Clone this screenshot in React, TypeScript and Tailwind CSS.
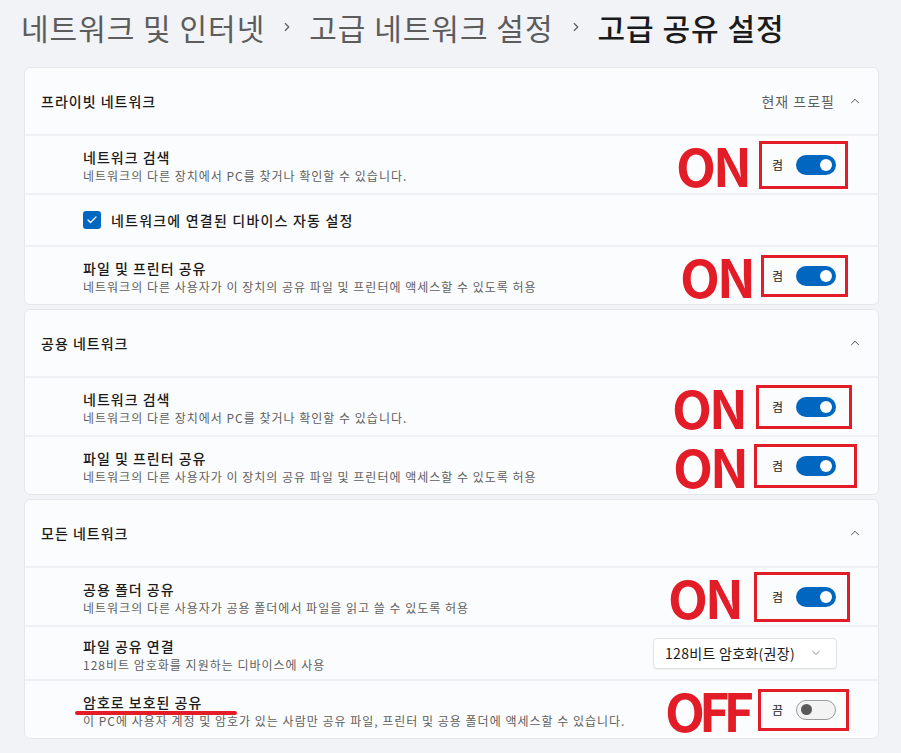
import { ChevronRight, ChevronUp, ChevronDown, Check } from 'lucide-react';

function Toggle({ on }: { on: boolean }) {
  return on ? (
    <div className="flex items-center justify-end w-[40px] h-[20px] rounded-full bg-[#0067c0] pr-[4px]">
      <div className="w-[12px] h-[12px] rounded-full bg-white" />
    </div>
  ) : (
    <div className="flex items-center w-[40px] h-[20px] rounded-full border border-[#9a9a9a] bg-[#f3f3f3] pl-[4px]">
      <div className="w-[11px] h-[11px] rounded-full bg-[#5a5a5a]" />
    </div>
  );
}

// red ON/OFF markup drawn over the screenshot
function Marked({ on, boxCls, gapCls }: { on: boolean; boxCls: string; gapCls: string }) {
  return (
    <div className={`flex items-center ${gapCls}`}>
      <span
        className={`font-['Noto_Sans_CJK_KR','Noto_Sans',sans-serif] font-bold text-[52px] leading-[40px] text-[#e31d27] ${
          on ? 'tracking-[-3px]' : 'tracking-[-6px]'
        }`}
      >
        {on ? 'ON' : 'OFF'}
      </span>
      <div className={`flex items-center gap-[13px] border-[3px] border-[#e31d27] ${boxCls}`}>
        <span className="text-[12px] text-[#1b1b1b]">{on ? '켬' : '끔'}</span>
        <Toggle on={on} />
      </div>
    </div>
  );
}

function SettingText({ title, desc }: { title: string; desc: string }) {
  return (
    <div className="flex flex-col mt-[3px]">
      <span className="text-[14px] leading-[19px] tracking-[1px] font-medium text-[#1b1b1b]">{title}</span>
      <span className="text-[12px] leading-[17px] tracking-[1px] text-[#5f5f5f]">{desc}</span>
    </div>
  );
}

function Row({ children, h = 'h-[59px]' }: { children: React.ReactNode; h?: string }) {
  return (
    <div className={`relative flex items-center justify-between ${h} border-t-2 border-[#eef0f3] pl-[58px] pr-[42px]`}>
      {children}
    </div>
  );
}

function CardHeader({ title, extra }: { title: string; extra?: string }) {
  return (
    <div className="flex items-center justify-between h-[66px] pl-[16px] pr-[16px]">
      <span className="text-[14px] tracking-[1px] font-medium text-[#1b1b1b]">{title}</span>
      <div className="flex items-center gap-[13px] text-[#5f5f5f]">
        {extra && <span className="text-[14px] tracking-[1px]">{extra}</span>}
        <ChevronUp size={14} strokeWidth={1.5} className="text-[#3a3a3a]" />
      </div>
    </div>
  );
}

export default function App() {
  return (
    <div className="w-[901px] h-[753px] overflow-hidden bg-[#f1f3f6] pl-[24px] pr-[22px] font-['Noto_Sans_CJK_KR','Noto_Sans',sans-serif]">
      {/* Breadcrumb */}
      <div className="flex items-center h-[42px] mt-[6px] mb-[19px] -ml-[3px] text-[30px] tracking-[1px]">
        <span className="text-[#5c5c5c]">네트워크 및 인터넷</span>
        <ChevronRight size={14} strokeWidth={2} className="mx-[15px] text-[#5c5c5c]" />
        <span className="text-[#5c5c5c]">고급 네트워크 설정</span>
        <ChevronRight size={14} strokeWidth={2} className="mx-[15px] text-[#5c5c5c]" />
        <span className="font-medium text-[#1b1b1b]">고급 공유 설정</span>
      </div>

      <div className="flex flex-col gap-[4px]">
        {/* Private network */}
        <div className="bg-[#fbfcfd] border border-[#e5e7ea] rounded-[6px]">
          <CardHeader title="프라이빗 네트워크" extra="현재 프로필" />
          <Row>
            <SettingText title="네트워크 검색" desc="네트워크의 다른 장치에서 PC를 찾거나 확인할 수 있습니다." />
            <Marked on gapCls="gap-[10px]" boxCls="pl-[10px] pr-[9px] py-[11px] -mr-[12px]" />
          </Row>
          <Row h="h-[52px]">
            <div className="flex items-center gap-[10px]">
              <div className="flex items-center justify-center w-[18px] h-[18px] rounded-[3px] bg-[#0067c0]">
                <Check size={12} strokeWidth={2.5} className="text-white" />
              </div>
              <span className="text-[14px] tracking-[1.2px] font-medium text-[#1b1b1b]">네트워크에 연결된 디바이스 자동 설정</span>
            </div>
          </Row>
          <Row>
            <SettingText title="파일 및 프린터 공유" desc="네트워크의 다른 사용자가 이 장치의 공유 파일 및 프린터에 액세스할 수 있도록 허용" />
            <Marked on gapCls="gap-[8px]" boxCls="pl-[8px] pr-[9px] py-[8px] -mr-[12px]" />
          </Row>
        </div>

        {/* Public network */}
        <div className="bg-[#fbfcfd] border border-[#e5e7ea] rounded-[6px]">
          <CardHeader title="공용 네트워크" />
          <Row>
            <SettingText title="네트워크 검색" desc="네트워크의 다른 장치에서 PC를 찾거나 확인할 수 있습니다." />
            <Marked on gapCls="gap-[11px]" boxCls="pl-[13px] pr-[13px] py-[9px] -mr-[16px]" />
          </Row>
          <Row>
            <SettingText title="파일 및 프린터 공유" desc="네트워크의 다른 사용자가 이 장치의 공유 파일 및 프린터에 액세스할 수 있도록 허용" />
            <Marked on gapCls="gap-[8px]" boxCls="pl-[15px] pr-[18px] py-[9px] -mr-[21px]" />
          </Row>
        </div>

        {/* All networks */}
        <div className="bg-[#fbfcfd] border border-[#e5e7ea] rounded-[6px]">
          <CardHeader title="모든 네트워크" />
          <Row>
            <SettingText title="공용 폴더 공유" desc="네트워크의 다른 사용자가 공용 폴더에서 파일을 읽고 쓸 수 있도록 허용" />
            <Marked on gapCls="gap-[13px]" boxCls="pl-[15px] pr-[11px] py-[12px] -mr-[14px]" />
          </Row>
          <Row h="h-[54px]">
            <SettingText title="파일 공유 연결" desc="128비트 암호화를 지원하는 디바이스에 사용" />
            <div className="flex items-center justify-between w-[184px] h-[31px] -mr-px bg-white border border-[#e3e3e3] rounded-[4px] shadow-[0_1px_1px_rgba(0,0,0,0.06)] pl-[11px] pr-[14px]">
              <span className="text-[14px] tracking-[0.3px] text-[#1b1b1b]">128비트 암호화(권장)</span>
              <ChevronDown size={12} strokeWidth={1.5} className="text-[#5f5f5f]" />
            </div>
          </Row>
          <Row>
            <SettingText title="암호로 보호된 공유" desc="이 PC에 사용자 계정 및 암호가 있는 사람만 공유 파일, 프린터 및 공용 폴더에 액세스할 수 있습니다." />
            <Marked on={false} gapCls="gap-[10px]" boxCls="pl-[11px] pr-[10px] py-[8px] -mr-[13px]" />
            <div className="absolute left-[50px] top-[30px] w-[162px] h-[4px] rounded-full bg-[#e31d27]" />
          </Row>
        </div>
      </div>
    </div>
  );
}
